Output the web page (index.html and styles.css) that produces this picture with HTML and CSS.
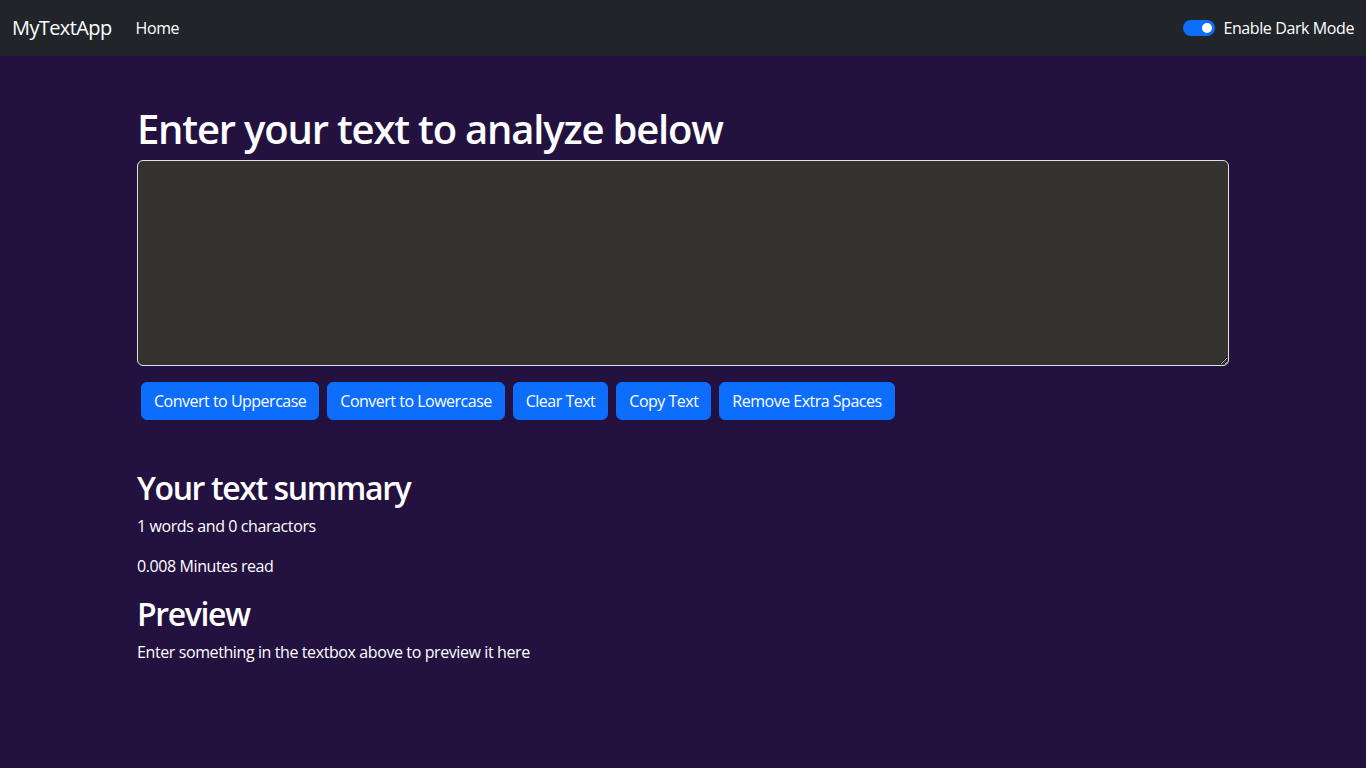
FILE: index.html
```html
<!DOCTYPE html>
<html lang="en">
<head>
    <meta charset="UTF-8">
    <meta name="viewport" content="width=device-width, initial-scale=1.0">
    <title>MyTextApp</title>
    <link rel="stylesheet" href="styles.css">
</head>
<body>
    <nav class="navbar">
        <div class="navbar-left">
            <a class="brand" href="#">MyTextApp</a>
            <a class="nav-link" href="#">Home</a>
        </div>
        <div class="mode-switch">
            <span class="switch-track"><span class="switch-knob"></span></span>
            <label class="switch-label">Enable Dark Mode</label>
        </div>
    </nav>

    <div class="container">
        <h1>Enter your text to analyze below</h1>
        <textarea class="text-box" id="myBox" rows="8"></textarea>
        <div class="actions">
            <button class="btn">Convert to Uppercase</button>
            <button class="btn">Convert to Lowercase</button>
            <button class="btn">Clear Text</button>
            <button class="btn">Copy Text</button>
            <button class="btn">Remove Extra Spaces</button>
        </div>

        <h2 class="summary-title">Your text summary</h2>
        <p>1 words and 0 charactors</p>
        <p>0.008 Minutes read</p>
        <h2>Preview</h2>
        <p>Enter something in the textbox above to preview it here</p>
    </div>
</body>
</html>
```

FILE: styles.css
```css
body {
    margin: 0;
    font-family: 'Open Sans', 'Noto Sans', sans-serif;
    font-size: 16px;
    line-height: 24px;
    letter-spacing: -0.4px;
    background-color: #23113f;
    color: #fff;
}

.navbar {
    height: 56px;
    background-color: #212529;
    display: flex;
    justify-content: space-between;
    align-items: center;
    padding: 0 12px;
}

.navbar-left {
    display: flex;
    align-items: center;
}

.brand {
    font-size: 20px;
    line-height: 30px;
    letter-spacing: -0.6px;
    color: #fff;
    text-decoration: none;
    margin-right: 16px;
}

.nav-link {
    color: #fff;
    text-decoration: none;
    padding: 8px;
}

.mode-switch {
    display: flex;
    align-items: center;
    gap: 8px;
}

.switch-track {
    width: 32px;
    height: 16px;
    border-radius: 16px;
    background-color: #0d6efd;
    display: flex;
    align-items: center;
    justify-content: flex-end;
    padding: 0 3px;
    box-sizing: border-box;
}

.switch-knob {
    width: 10px;
    height: 10px;
    border-radius: 50%;
    background-color: #fff;
}

.container {
    max-width: 1140px;
    margin: 0 auto;
    padding: 48px 24px 0;
    box-sizing: border-box;
}

h1 {
    font-size: 40px;
    line-height: 50px;
    font-weight: 600;
    letter-spacing: -1.2px;
    margin: 0 0 6px;
}

h2 {
    font-size: 32px;
    line-height: 40px;
    font-weight: 600;
    letter-spacing: -1.4px;
    margin: 0 0 6px;
}

.summary-title {
    margin-top: 48px;
}

p {
    margin: 0 0 16px;
}

.text-box {
    display: block;
    width: 100%;
    height: 206px;
    box-sizing: border-box;
    padding: 6px 12px;
    background-color: #33322f;
    color: #fff;
    border: 1px solid #dee2e6;
    border-radius: 6px;
    font: inherit;
}

.actions {
    display: flex;
    gap: 8px;
    margin-top: 16px;
    padding-left: 4px;
}

.btn {
    height: 38px;
    padding: 6px 12px;
    font-family: inherit;
    font-size: 16px;
    line-height: 24px;
    letter-spacing: -0.5px;
    color: #fff;
    background-color: #0d6efd;
    border: 1px solid #0d6efd;
    border-radius: 6px;
    cursor: pointer;
}
```
